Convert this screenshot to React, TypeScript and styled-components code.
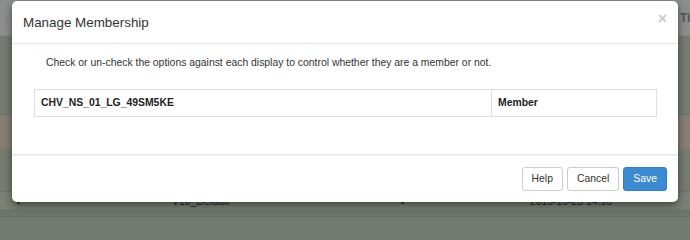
import React from "react";
import styled, { createGlobalStyle } from "styled-components";

const GlobalStyle = createGlobalStyle`
  html, body {
    margin: 0;
    padding: 0;
    width: 690px;
    height: 217px;
    overflow: hidden;
    background: #737a6f;
    font-family: "Liberation Sans", Arial, sans-serif;
  }
`;

const Screen = styled.div`
  position: relative;
  width: 690px;
  height: 217px;
  overflow: hidden;
`;

/* dimmed page behind the dialog */
const Backdrop = styled.div`
  display: flex;
  flex-direction: column;
  width: 100%;
  height: 100%;
`;

const BgRow = styled.div<{ $h: number; $bg: string }>`
  position: relative;
  flex: 0 0 ${(p) => p.$h}px;
  display: flex;
  align-items: center;
  background: ${(p) => p.$bg};
  box-shadow: inset 0 -1px 0 rgba(0, 0, 0, 0.06);
  font-size: 10.4px;
  color: #262a24;
`;

const BgCell = styled.span<{ $left: number }>`
  position: absolute;
  left: ${(p) => p.$left}px;
`;

const Modal = styled.div`
  position: absolute;
  top: 1px;
  left: 12px;
  width: 666px;
  height: 201px;
  background: #fff;
  border-radius: 5px;
  box-shadow: 0 3px 9px rgba(0, 0, 0, 0.5);
  display: flex;
  flex-direction: column;
  color: #333;
`;

const Header = styled.div`
  height: 42px;
  border-bottom: 1px solid #e5e5e5;
  display: flex;
  align-items: center;
  justify-content: space-between;
  padding: 0 11px;
`;

const Title = styled.h4`
  margin: 0;
  font-size: 13.4px;
  font-weight: normal;
  color: #333;
  padding-top: 1px;
`;

const Close = styled.button`
  border: 0;
  background: none;
  padding: 0;
  font-family: "Liberation Sans", Arial, sans-serif;
  font-size: 16px;
  font-weight: bold;
  line-height: 1;
  color: #000;
  opacity: 0.2;
  margin-top: -6px;
  margin-right: 0;
`;

const Body = styled.div`
  flex: 1;
  padding: 11px 21px 0 22px;
`;

const Intro = styled.p`
  margin: 0 0 19px 12px;
  font-size: 10.4px;
  line-height: 15px;
`;

const Table = styled.table`
  width: 100%;
  border-collapse: collapse;
  font-size: 10.4px;
`;

const Cell = styled.td<{ $w?: number }>`
  border: 1px solid #ddd;
  padding: 6px 6px;
  line-height: 14px;
  font-weight: bold;
  color: #222;
  width: ${(p) => (p.$w ? `${p.$w}px` : "auto")};
`;

const Footer = styled.div`
  border-top: 1px solid #e5e5e5;
  box-shadow: inset 0 3px 1px -2px #f2f2f2;
  padding: 12px 11px 11px;
  display: flex;
  justify-content: flex-end;
  gap: 4px;
`;

const Button = styled.button<{ $primary?: boolean }>`
  font-family: "Liberation Sans", Arial, sans-serif;
  font-size: 10.4px;
  line-height: 14px;
  padding: 4px 9px;
  border-radius: 3px;
  border: 1px solid ${(p) => (p.$primary ? "#357ebd" : "#ccc")};
  background: ${(p) => (p.$primary ? "#3c8bd0" : "#fff")};
  color: ${(p) => (p.$primary ? "#fff" : "#333")};
`;

export default function App() {
  return (
    <Screen>
      <GlobalStyle />
      <Backdrop>
        <BgRow $h={36} $bg="#8d8f8b">
          <BgCell $left={4} style={{ color: "#777" }}>↑</BgCell>
          <BgCell $left={680} style={{ fontWeight: "bold", color: "#555", fontSize: 12 }}>Ti</BgCell>
        </BgRow>
        <BgRow $h={79} $bg="#757c71" />
        <BgRow $h={35} $bg="#877f73" />
        <BgRow $h={42} $bg="#757c71" />
        <BgRow $h={18} $bg="#7a8175">
          <BgCell $left={16}>▾</BgCell>
          <BgCell $left={172}>V10_Default</BgCell>
          <BgCell $left={400}>▾</BgCell>
          <BgCell $left={530}>2015-10-23 14:10</BgCell>
        </BgRow>
        <BgRow $h={7} $bg="#6e7569" />
      </Backdrop>

      <Modal>
        <Header>
          <Title>Manage Membership</Title>
          <Close>×</Close>
        </Header>
        <Body>
          <Intro>
            Check or un-check the options against each display to control whether they are a member or not.
          </Intro>
          <Table>
            <tbody>
              <tr>
                <Cell>CHV_NS_01_LG_49SM5KE</Cell>
                <Cell $w={152}>Member</Cell>
              </tr>
            </tbody>
          </Table>
        </Body>
        <Footer>
          <Button>Help</Button>
          <Button>Cancel</Button>
          <Button $primary>Save</Button>
        </Footer>
      </Modal>
    </Screen>
  );
}
